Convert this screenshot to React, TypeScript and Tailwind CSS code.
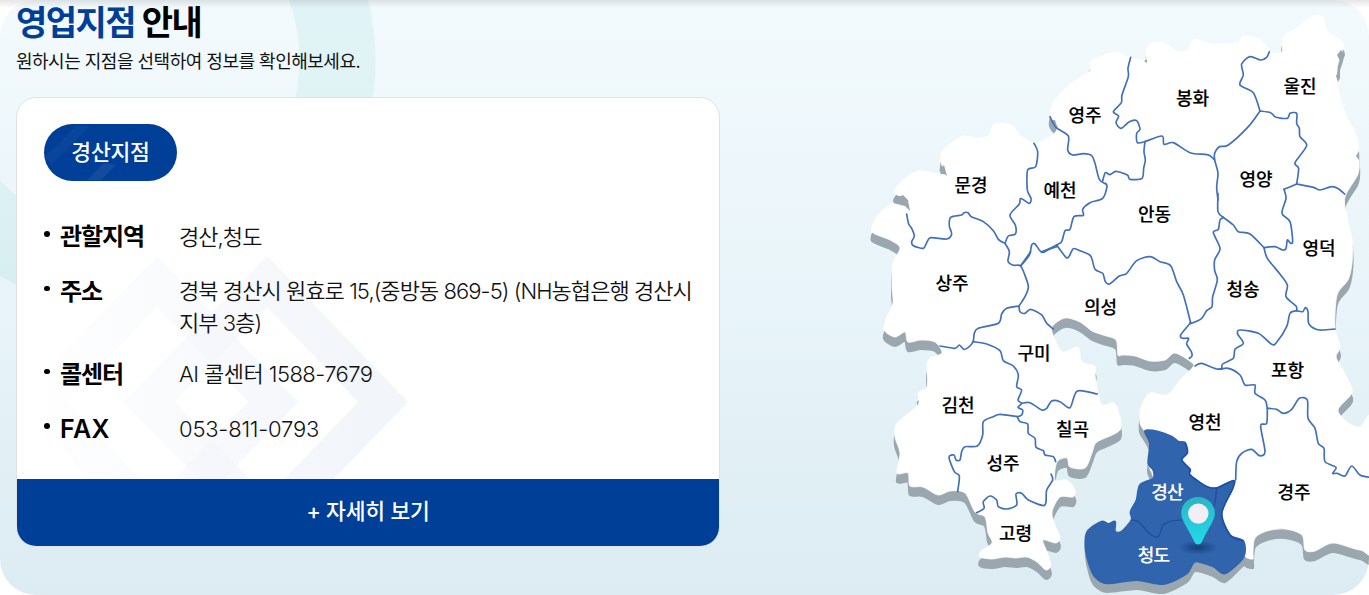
const OUTLINE =
  '872,232 875,220 883,210 893,204 905,206 903,198 894,192 903,180 918,171 932,173 945,174 941,162 943,150 952,143 963,136 977,138 988,136 993,125 1003,123 1013,126 1020,135 1033,143 1048,138 1057,129 1050,117 1053,103 1062,92 1073,82 1090,71 1090,62 1102,56 1115,52 1130,57 1145,60 1147,47 1155,42 1165,43 1177,51 1188,50 1193,40 1202,41 1213,44 1237,43 1243,36 1257,38 1268,48 1272,53 1282,52 1283,37 1297,28 1310,17 1323,17 1327,31 1343,42 1342,52 1337,70 1340,97 1347,117 1357,137 1359,157 1358,174 1345,197 1347,217 1352,240 1352,263 1348,280 1337,295 1335,327 1340,347 1336,357 1343,370 1352,389 1350,396 1338,410 1347,422 1360,427 1375,418 1375,546 1360,550 1333,543 1315,551 1305,550 1302,535 1285,529 1267,531 1255,538 1253,552 1253,559 1247,558 1243,557 1225,573 1213,567 1195,562 1187,573 1163,584 1137,580 1107,583 1095,577 1090,567 1086,548 1087,532 1102,522 1115,522 1115,530 1120,532 1132,520 1131,512 1137,500 1140,485 1153,478 1148,463 1150,443 1145,432 1140,423 1141,407 1150,393 1167,395 1180,380 1193,367 1191,362 1175,353 1165,360 1150,361 1135,356 1123,355 1118,355 1116,340 1103,335 1092,331 1080,322 1065,318 1052,327 1055,340 1063,352 1078,347 1082,362 1095,366 1095,375 1098,393 1102,405 1113,403 1118,410 1120,430 1097,442 1092,453 1085,468 1070,467 1067,458 1057,462 1055,480 1067,480 1075,490 1073,497 1060,497 1052,512 1055,525 1060,537 1056,543 1043,540 1047,552 1051,565 1046,570 1037,562 1027,557 1016,558 1005,557 992,559 980,557 981,551 992,543 988,533 985,517 975,512 965,493 950,491 938,495 923,487 910,486 908,473 897,473 900,453 895,437 897,423 918,405 918,393 927,387 927,367 930,358 942,353 935,342 921,340 908,342 905,332 895,337 884,330 887,317 893,303 892,287 893,263 900,248 890,240'

const SHEETS = [
  {
    at: 'translate(860 100) scale(0.33333)',
    borders: [
      '140,342 146,372 155,385 163,408 155,425 160,437 190,445 200,428 212,413 260,417 275,402 268,378 272,352 305,345 312,338 324,338 334,350 370,365 400,392 415,418 435,430',
      '522,130 533,155 527,200 503,210 502,270 513,295 508,310 482,295 478,312 450,345 466,375 466,402 445,408 435,430',
      '435,430 448,455 444,484 460,496 482,498 500,540 505,562 495,590 477,618',
      '482,498 508,465 515,435 525,432 545,457 565,449 590,440',
      '477,618 440,625 425,642 415,670 355,685 343,700 340,722 330,738 312,748 298,735 285,745 240,738',
      '477,618 480,635 495,640 512,628 545,645 560,670 580,687',
    ],
  },
  {
    at: 'translate(1040 0) scale(0.33333)',
    borders: [
      '272,172 264,205 265,230 246,285 244,308 220,335 236,348 228,368 243,385 268,365 290,362 300,388 290,400 292,428 315,425',
      '315,425 366,408 372,433 400,428 450,458 495,463 510,467 524,480',
      '315,425 312,455 316,480 311,505 306,535 270,538 262,525 228,514 210,524 196,518 188,543',
      '30,350 48,382 85,408 83,450 98,465 130,461 155,467 165,490 178,538 198,552',
    ],
  },
  {
    at: 'translate(1020 180) scale(0.33333)',
    borders: [
      '256,10 261,20 248,55 210,68 188,88 190,106 162,110 150,148 135,152 125,185 110,195',
      '110,195 87,206 65,215',
      '32,215 2,257',
      '110,195 138,232 148,228 160,206 182,213 212,228 225,268 248,280 256,305 268,312 298,288 320,280 350,242 390,230 420,245 452,257 470,305 490,345 512,428',
      '512,428 482,465 488,475 506,475 500,492 514,515 516,528 508,535',
    ],
  },
  {
    at: 'translate(1200 0) scale(0.33333)',
    borders: [
      '208,155 200,172 182,180 150,170 125,192 130,225 120,255 160,278 180,333',
      '180,333 145,380 85,435 58,440 44,460 44,480 54,520 50,560 54,600',
      '180,333 212,338 228,352 262,355 270,340 290,340 290,370 298,385 300,410 320,437 285,488 296,505 290,552',
      '290,552 340,562 360,570 395,560 415,566 434,582',
      '290,552 252,568',
    ],
  },
  {
    at: 'translate(1190 180) scale(0.33333)',
    borders: [
      '84,40 84,95 100,112',
      '282,28 288,55 276,100 300,125 308,185 300,188 292,180 288,205 278,210 255,200 222,203',
      '100,112 130,135 145,155 180,162 222,203',
      '100,112 90,120 85,148 70,158 90,205 74,240 74,272 82,300 68,350 66,380 50,392 35,415 5,430 0,428',
      '222,203 232,235 268,280 292,315 288,350 318,378 320,392',
      '320,392 338,395 346,383 354,395 356,430 378,448 400,450 435,447',
      '320,392 300,400 290,440 260,487 245,493 205,460 150,450 143,462 160,490 135,508 130,535 98,552 96,568',
    ],
  },
  {
    at: 'translate(1070 360) scale(0.33333)',
    borders: [
      '375,18 395,10 440,27 475,25 510,45 525,75 555,75 555,100 585,120 592,145',
      '592,145 620,148 640,160 665,148 688,115 712,120 714,175 735,205 745,250 762,265 765,305 798,322 788,340 802,340 825,348 845,318 870,345 900,352',
      '592,145 590,190 572,198 585,275 568,287 545,268 515,280 500,305 497,360',
    ],
  },
  {
    at: 'translate(880 320) scale(0.33333)',
    borders: [
      '280,65 320,72 360,92 370,122 400,138 415,165 410,200 425,210 414,240 425,250 414,262 428,270 425,285 412,290',
      '425,250 450,248 485,270 500,265 515,243 540,245 570,263 592,213 652,222',
      '412,290 360,283 340,290 310,305 308,345 292,378 255,380 245,395 240,420 228,420 222,405 207,412 223,455 238,468 233,515',
      '412,290 420,305 443,312 445,340 465,355 468,382 490,392 495,405 520,410 527,425',
      '290,578 312,565 310,545 330,528 350,540 355,560 380,567 410,555 408,522 425,520 445,540 490,557 498,545 500,510 518,480 513,462',
    ],
  },
]

const SELECTED_AREA =
  '225,213 265,215 305,230 325,245 345,248 352,278 335,300 360,328 360,345 410,380 440,384 490,362 488,385 455,460 480,525 520,543 520,592 465,640 430,620 375,605 350,640 280,672 200,660 110,670 75,650 60,620 47,565 52,515 95,485 115,492 135,485 135,515 155,515 185,480 182,455 200,420 210,375 250,355 250,330 235,310 240,250'

const CITIES = [
  { name: '울진', x: 1300, y: 86 },
  { name: '봉화', x: 1192.5, y: 98 },
  { name: '영주', x: 1085, y: 115 },
  { name: '영양', x: 1256, y: 179 },
  { name: '문경', x: 971, y: 185 },
  { name: '예천', x: 1060, y: 190.5 },
  { name: '안동', x: 1154.5, y: 214 },
  { name: '영덕', x: 1319, y: 248 },
  { name: '상주', x: 952, y: 283.5 },
  { name: '청송', x: 1243, y: 289.5 },
  { name: '의성', x: 1100.5, y: 307 },
  { name: '구미', x: 1034, y: 353 },
  { name: '포항', x: 1287.5, y: 370.5 },
  { name: '김천', x: 958, y: 405 },
  { name: '영천', x: 1205, y: 422.5 },
  { name: '칠곡', x: 1072.5, y: 429.5 },
  { name: '성주', x: 1003, y: 463.5 },
  { name: '경주', x: 1294, y: 492 },
  { name: '고령', x: 1015.5, y: 533 },
  { name: '경산', x: 1167, y: 492, active: true },
  { name: '청도', x: 1153.5, y: 555.5, active: true },
]

const INFO = [
  { label: '관할지역', value: '경산,청도' },
  { label: '주소', value: '경북 경산시 원효로 15,(중방동 869-5) (NH농협은행 경산시지부 3층)' },
  { label: '콜센터', value: 'AI 콜센터 1588-7679', valueClass: 'tracking-[-0.55px]' },
  { label: 'FAX', value: '053-811-0793', labelClass: 'text-[25px] font-semibold tracking-[0.5px]', valueClass: 'tracking-[-0.2px]' },
]

// Catmull-Rom spline through the points
function curve(points: string, closed = false) {
  const p = points.split(' ').map((s) => s.split(',').map(Number))
  const n = p.length
  const at = (i: number) => (closed ? p[(i + n) % n] : p[Math.max(0, Math.min(n - 1, i))])
  let d = `M${p[0].join(' ')}`
  for (let i = 0; i < (closed ? n : n - 1); i++) {
    const [a, b, c, e] = [at(i - 1), at(i), at(i + 1), at(i + 2)]
    d += `C${b[0] + (c[0] - a[0]) / 7} ${b[1] + (c[1] - a[1]) / 7} ${c[0] - (e[0] - b[0]) / 7} ${c[1] - (e[1] - b[1]) / 7} ${c[0]} ${c[1]}`
  }
  return closed ? `${d}Z` : d
}

const LAND = curve(OUTLINE, true)

function Backdrop() {
  return (
    <svg className="absolute inset-0" width="400" height="400" viewBox="0 0 400 400" fill="none">
      <defs>
        <linearGradient id="ring" x1="0" y1="0" x2="0" y2="1">
          <stop offset="0" stopColor="#e4f3f8" />
          <stop offset="0.6" stopColor="#dff3f5" />
          <stop offset="1" stopColor="#d8eff1" />
        </linearGradient>
      </defs>
      <circle cx="125.5" cy="60" r="212" stroke="url(#ring)" strokeWidth="76" />
    </svg>
  )
}

function Watermark() {
  return (
    <svg className="absolute bottom-0 left-0" width="400" height="225" viewBox="17 254 400 225" fill="none">
      <defs>
        <linearGradient id="fade" gradientUnits="userSpaceOnUse" x1="20" y1="0" x2="360" y2="0">
          <stop offset="0" stopColor="#f2f5fa" stopOpacity="0" />
          <stop offset="1" stopColor="#f2f5fa" />
        </linearGradient>
      </defs>
      <path d="M157 256 298 402 157 548 15 402ZM157 307 67 402 157 497 248 402Z" fill="url(#fade)" fillRule="evenodd" />
      <path d="M267 256 408 402 267 548 123 402ZM267 307 175 402 267 497 358 402Z" fill="url(#fade)" fillRule="evenodd" />
    </svg>
  )
}

function BranchBadge() {
  return (
    <div className="relative flex h-[57px] w-[133px] items-center justify-center overflow-hidden rounded-full bg-[#003f98]">
      <svg className="absolute inset-0" width="133" height="57" viewBox="0 0 133 57" fill="#fff">
        <path d="M0 33 20 14 28 20 8 40ZM20 14 32 2 46 2 28 20Z" opacity="0.03" />
        <path d="M43 56 60 39 72 41 57 56Z" opacity="0.07" />
      </svg>
      <span className="relative -top-px text-[21.5px] leading-8 font-medium tracking-[-0.2px] text-white">경산지점</span>
    </div>
  )
}

function BranchCard() {
  return (
    <article className="mt-[21px] flex h-[450px] w-[704px] flex-col overflow-hidden rounded-[20px] border border-[#e2e2e2] bg-white bg-clip-padding">
      <div className="relative flex-1 px-[27px] pt-[26px]">
        <Watermark />
        <BranchBadge />
        <dl className="relative mt-[37px] flex flex-col gap-[18.5px]">
          {INFO.map((row) => (
            <div key={row.label} className="flex">
              <dt className="flex h-9 w-[135px] shrink-0 text-[24px] leading-[38px] font-bold tracking-[-1.1px] text-black">
                <span className="mt-[13px] mr-[10.5px] size-[5.5px] shrink-0 rounded-full bg-black" />
                <span className={row.labelClass}>{row.label}</span>
              </dt>
              <dd className="-mb-[2px] w-[530px] pt-[2.5px] text-[22px] leading-8 font-[350] tracking-[-0.94px] break-all text-[#111]">
                <span className={row.valueClass}>{row.value}</span>
              </dd>
            </div>
          ))}
        </dl>
      </div>
      <button type="button" className="-mx-px -mb-px h-[68px] shrink-0 bg-[#003f98] pb-[3px] text-[21.5px] font-medium tracking-[-0.2px] text-white">
        + 자세히 보기
      </button>
    </article>
  )
}

function MapPin() {
  return (
    <g>
      <ellipse cx="1198" cy="547.5" rx="20" ry="7" fill="url(#pinShadow)" />
      <path
        d="M1198 497c-9.400 0-16.800 7.200-16.800 16.300 0 7.700 8.600 17.700 13 28.500 1.600 3.600 6.200 3.600 7.800 0 4.400-10.800 12.900-20.800 12.900-28.500 0-9.100-7.500-16.300-16.900-16.300Z"
        fill="url(#pin)"
      />
      <circle cx="1198.300" cy="513.600" r="10.200" fill="#f2eef8" />
    </g>
  )
}

function BranchMap() {
  return (
    <svg className="ml-auto shrink-0" width="509" height="595" viewBox="860 0 509 595" fill="none">
      <defs>
        <linearGradient id="pin" x1="0" y1="0" x2="0" y2="1">
          <stop offset="0" stopColor="#2cb5c6" />
          <stop offset="1" stopColor="#22dbe9" />
        </linearGradient>
        <radialGradient id="pinShadow">
          <stop offset="0" stopColor="#123a78" stopOpacity="0.9" />
          <stop offset="1" stopColor="#123a78" stopOpacity="0" />
        </radialGradient>
      </defs>
      <path d={LAND} transform="translate(0 9)" fill="#9aa7ae" stroke="#9aa7ae" strokeWidth="2" strokeLinejoin="round" />
      <path d={LAND} fill="#fff" stroke="#fff" strokeWidth="0.8" strokeLinejoin="round" />
      <g fill="#9aa7ae">
        <path d="M893 199 903 195 908 200 910 211 905 206ZM939 170 944 165 947 176ZM1050 120 1055 120 1058 129 1051 127ZM1337 55 1341 50 1345 55 1340 61Z" />
        <path d="M1336 76 1340 68 1340 78 1338 82ZM1144 61 1147 59 1147 63ZM1356 156 1359 151 1359 160ZM1346 200 1357 180 1358 186 1350 197Z" />
      </g>
      <g transform="translate(1070 360) scale(0.33333)">
        <path d={curve(SELECTED_AREA, true)} fill="#3064ad" stroke="#3064ad" strokeWidth="6" strokeLinejoin="round" />
        <g stroke="#1c4fa0" strokeWidth="4" strokeLinejoin="round">
          <path d={curve('185,480 205,485 240,522 265,530 280,495 310,482 340,480')} />
          <path d={curve('440,384 436,420 428,450')} />
          <path d={curve('345,248 352,278 335,300 360,328 360,345 410,380 440,384 490,362 488,385 455,460 480,525 520,543')} />
        </g>
      </g>
      {SHEETS.map((sheet) => (
        <g key={sheet.at} transform={sheet.at} stroke="#416fb9" strokeWidth="5" strokeLinejoin="round" strokeLinecap="round">
          {sheet.borders.map((points) => (
            <path key={points} d={curve(points)} />
          ))}
        </g>
      ))}
      <g className="text-[18px] font-medium" textAnchor="middle" strokeWidth="0.15">
        {CITIES.map((city) => (
          <text
            key={city.name}
            x={city.x}
            y={city.y + 6.5}
            className={city.active ? 'fill-white stroke-white tracking-[-0.8px]' : 'fill-black stroke-black'}
          >
            {city.name}
          </text>
        ))}
      </g>
      <MapPin />
    </svg>
  )
}

export default function App() {
  return (
    <main className="h-[595px] w-full overflow-hidden bg-white font-['Inter','Noto_Sans_CJK_KR',sans-serif]">
      <section className="relative flex h-full overflow-hidden rounded-[36px] bg-linear-to-b from-[#f3fafd] via-[#e8f4f9] to-[#dcecf2]">
        <Backdrop />
        <div className="relative ml-4 shrink-0">
          <h2 className="mt-0.5 h-[41px] text-[34px] leading-[41px] font-bold tracking-[-1.5px] text-black">
            <span className="text-[#003f98]">영업지점</span> 안내
          </h2>
          <p className="mt-[5px] h-7 text-[18px] leading-7 tracking-[-0.5px] text-[#111]">원하시는 지점을 선택하여 정보를 확인해보세요.</p>
          <BranchCard />
        </div>
        <BranchMap />
      </section>
      <div className="pointer-events-none absolute inset-x-0 top-0 h-2 bg-linear-to-b from-black/10 to-transparent" />
    </main>
  )
}
